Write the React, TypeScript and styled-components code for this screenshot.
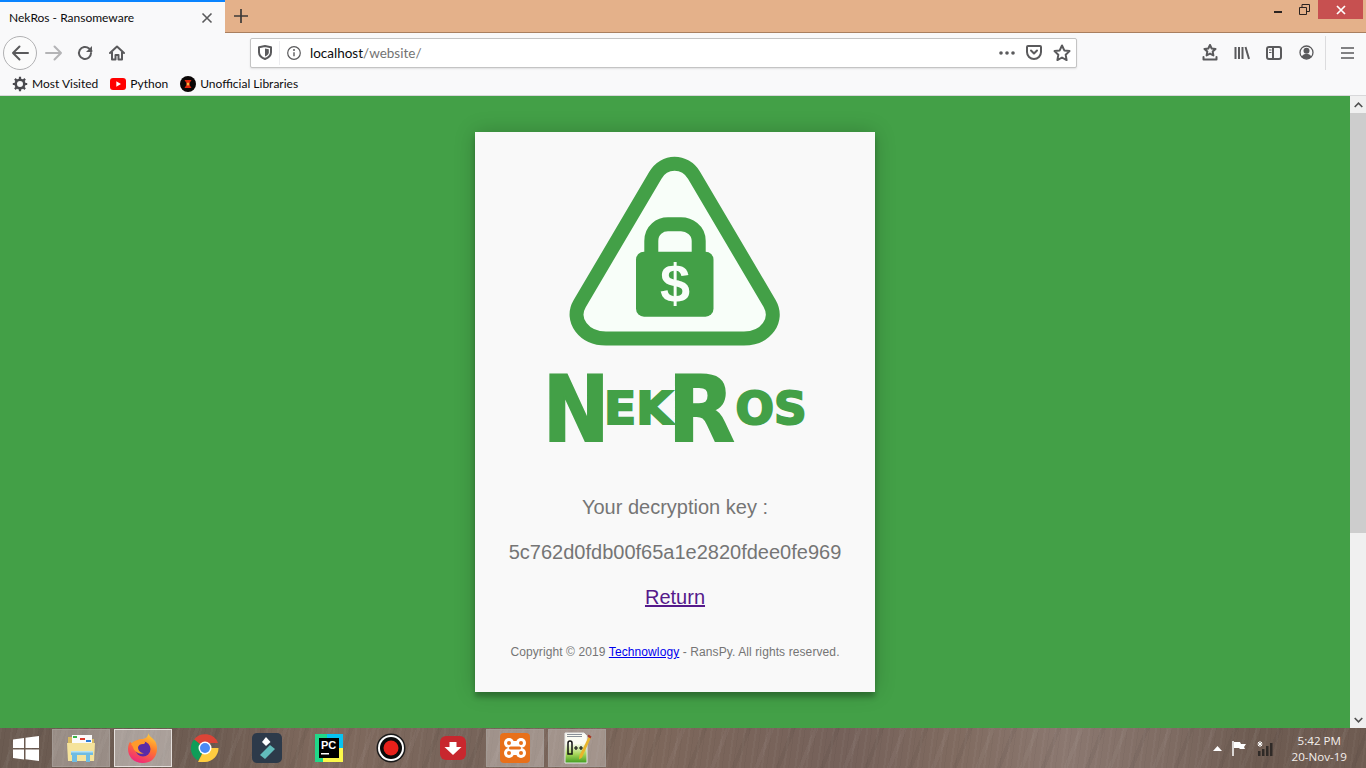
import React from 'react';
import styled, { createGlobalStyle } from 'styled-components';

const UI_FONT = 'Lato, "Open Sans", sans-serif';
const GREEN = '#43a047';
const ICON = '#5a5a5c';

const Global = createGlobalStyle`
  html, body {
    margin: 0;
    padding: 0;
    height: 100%;
    overflow: hidden;
  }
  #root {
    height: 100%;
  }
`;

const Screen = styled.div`
  width: 1366px;
  height: 768px;
  display: flex;
  flex-direction: column;
  overflow: hidden;
  font-family: ${UI_FONT};
`;

const TitleBar = styled.div`
  height: 33px;
  flex: none;
  display: flex;
  background: #e4b18a;
  border-bottom: 1px solid #a97f5f;
  box-sizing: border-box;
`;

const Tab = styled.div`
  width: 225px;
  height: 33px;
  box-sizing: border-box;
  border-top: 2px solid #0a84ff;
  background: #f9f9fa;
  display: flex;
  align-items: center;
  justify-content: space-between;
  padding: 0 12px 0 9px;
  font-size: 12px;
  color: #0c0c0d;
`;

const PlusButton = styled.div`
  width: 32px;
  display: flex;
  align-items: center;
  justify-content: center;
`;

const WinButtons = styled.div`
  margin-left: auto;
  margin-right: 3px;
  display: flex;
  align-items: flex-start;
`;

const WinButton = styled.div<{ $w: number; $close?: boolean }>`
  width: ${(p) => p.$w}px;
  height: 19px;
  display: flex;
  align-items: center;
  justify-content: center;
  background: ${(p) => (p.$close ? '#c75050' : 'transparent')};
`;

const NavBar = styled.div`
  height: 39px;
  flex: none;
  display: flex;
  align-items: center;
  background: #f9f9fa;
  padding: 0 3px;
`;

const BackCircle = styled.div`
  width: 32px;
  height: 32px;
  border: 1px solid #b1b1b3;
  border-radius: 50%;
  background: #fbfbfb;
  display: flex;
  align-items: center;
  justify-content: center;
`;

const NavIcon = styled.div<{ $w: number }>`
  width: ${(p) => p.$w}px;
  display: flex;
  justify-content: center;
  align-items: center;
`;

const UrlBar = styled.div`
  width: 827px;
  height: 30px;
  box-sizing: border-box;
  margin-left: 116px;
  background: #fff;
  border: 1px solid #c4c4c4;
  border-radius: 2px;
  box-shadow: 0 1px 2px rgba(0, 0, 0, 0.1);
  display: flex;
  align-items: center;
  padding: 0 5px 0 7px;
`;

const UrlDivider = styled.div`
  width: 1px;
  height: 24px;
  background: #ededf0;
  margin: 0 7px;
`;

const UrlText = styled.div`
  margin-left: 9px;
  flex: 1;
  font-size: 13.5px;
  color: #0c0c0d;
`;

const UrlPath = styled.span`
  color: #737373;
`;

const UrlActions = styled.div`
  display: flex;
  align-items: center;
  gap: 11px;
`;

const ToolIcons = styled.div`
  margin-left: auto;
  display: flex;
  align-items: center;
`;

const ToolIcon = styled.div`
  width: 32px;
  display: flex;
  justify-content: center;
`;

const ToolDivider = styled.div`
  width: 1px;
  height: 34px;
  background: #dcdcde;
  margin: 0 5px 0 3px;
`;

const BookmarkBar = styled.div`
  height: 24px;
  flex: none;
  box-sizing: border-box;
  display: flex;
  align-items: center;
  gap: 12px;
  background: #f9f9fa;
  border-bottom: 1px solid #d8d8da;
  padding-left: 12px;
  font-size: 12px;
  color: #0c0c0d;
`;

const Bookmark = styled.div`
  display: flex;
  align-items: center;
  gap: 4px;
`;

const Viewport = styled.div`
  flex: 1;
  min-height: 0;
  display: flex;
`;

const Page = styled.main`
  flex: 1;
  background: ${GREEN};
  display: flex;
  justify-content: center;
  padding-top: 36px;
`;

const Scrollbar = styled.div`
  width: 16px;
  background: #f0f0f0;
  display: flex;
  flex-direction: column;
`;

const ScrollArrow = styled.div`
  height: 17px;
  flex: none;
  display: flex;
  align-items: center;
  justify-content: center;
`;

const ScrollThumb = styled.div`
  height: 420px;
  background: #cdcdcd;
  margin-bottom: auto;
`;

const Card = styled.section`
  width: 400px;
  height: 560px;
  box-sizing: border-box;
  background: #f9f9f9;
  box-shadow: 0 0 20px rgba(0, 0, 0, 0.2), 0 5px 5px rgba(0, 0, 0, 0.24);
  padding-top: 23px;
  display: flex;
  flex-direction: column;
  align-items: center;
  font-family: "Liberation Sans", Arial, sans-serif;
  color: #757575;
`;

const Logo = styled.svg`
  display: block;
  flex: none;
`;

const KeyLine = styled.div`
  font-size: 20px;
  line-height: 23px;
  margin-top: 22px;
`;

const KeyHeading = styled(KeyLine)`
  margin-top: 33px;
`;

const ReturnLink = styled.a`
  font-size: 20px;
  line-height: 23px;
  margin-top: 22px;
  color: #551a8b;
  text-decoration: underline;
`;

const Copyright = styled.div`
  font-size: 12px;
  line-height: 14px;
  letter-spacing: 0.1px;
  margin-top: 36px;
`;

const CopyrightLink = styled.a`
  color: #0000ee;
  text-decoration: underline;
`;

const Taskbar = styled.footer`
  height: 40px;
  flex: none;
  display: flex;
  align-items: center;
  color: #fff;
  background:
    repeating-linear-gradient(98deg, rgba(255, 255, 255, 0.03) 0 2px, transparent 2px 5px, rgba(0, 0, 0, 0.03) 5px 6px, transparent 6px 11px),
    repeating-linear-gradient(112deg, transparent 0 17px, rgba(255, 255, 255, 0.035) 17px 21px, transparent 21px 37px, rgba(0, 0, 0, 0.045) 37px 41px),
    linear-gradient(90deg, #6b5b51 0%, #6e5c52 16%, #806a5e 24%, #77645a 34%, #7d675b 48%, #75615a 62%, #806b60 70%, #8b7870 78%, #7e6b62 86%, #6d5b51 92%, #6f5c52 100%);
`;

const StartButton = styled.div`
  width: 52px;
  display: flex;
  justify-content: center;
`;

const TaskSlot = styled.div<{ $state?: 'open' | 'active' }>`
  width: 58px;
  height: 38px;
  margin-right: 4px;
  box-sizing: border-box;
  display: flex;
  align-items: center;
  justify-content: center;
  border: 1px solid
    ${(p) => (p.$state === 'active' ? '#e4dfdc' : p.$state === 'open' ? '#a39a94' : 'transparent')};
  background: ${(p) =>
    p.$state === 'active'
      ? 'rgba(255,255,255,0.42)'
      : p.$state === 'open'
        ? 'rgba(255,255,255,0.3)'
        : 'transparent'};
`;

const Tray = styled.div`
  margin-left: auto;
  display: flex;
  align-items: center;
  padding-right: 19px;
`;

const TrayIcons = styled.div`
  display: flex;
  align-items: center;
  gap: 10px;
  margin-right: 19px;
`;

const Clock = styled.div`
  font-family: "Open Sans", sans-serif;
  font-size: 11.6px;
  line-height: 16px;
  padding-top: 2px;
  text-align: center;
  color: #f4efec;
`;

const stroke = { fill: 'none', stroke: ICON, strokeWidth: 2, strokeLinecap: 'round', strokeLinejoin: 'round' } as const;

function BrowserChrome() {
  return (
    <>
      <TitleBar>
        <Tab>
          <span>NekRos - Ransomeware</span>
          <svg width="12" height="12" viewBox="0 0 12 12">
            <path d="M1.5 1.5l9 9M10.5 1.5l-9 9" stroke={ICON} strokeWidth="1.6" />
          </svg>
        </Tab>
        <PlusButton>
          <svg width="14" height="14" viewBox="0 0 14 14">
            <path d="M7 0v14M0 7h14" stroke="#3c3a38" strokeWidth="1.7" />
          </svg>
        </PlusButton>
        <WinButtons>
          <WinButton $w={26}>
            <svg width="10" height="7" viewBox="0 0 10 7"><rect x="1" y="5" width="8" height="2" fill="#2b2320" /></svg>
          </WinButton>
          <WinButton $w={27}>
            <svg width="11" height="11" viewBox="0 0 11 11">
              <path d="M.5 3.5h7v7h-7zM3 3.5V.5h7.5v7H7.5" fill="none" stroke="#2b2320" />
            </svg>
          </WinButton>
          <WinButton $w={45} $close>
            <svg width="10" height="10" viewBox="0 0 10 10">
              <path d="M1 1l8 8M9 1L1 9" stroke="#fff" strokeWidth="1.7" />
            </svg>
          </WinButton>
        </WinButtons>
      </TitleBar>
      <NavBar>
        <BackCircle>
          <svg width="18" height="16" viewBox="0 0 18 16">
            <path d="M17 8H2M8.5 1.5L2 8l6.5 6.5" {...stroke} />
          </svg>
        </BackCircle>
        <NavIcon $w={33}>
          <svg width="18" height="16" viewBox="0 0 18 16">
            <path d="M1 8h15M9.5 1.5L16 8l-6.5 6.5" {...stroke} stroke="#b4b4b6" />
          </svg>
        </NavIcon>
        <NavIcon $w={30}>
          <svg width="16" height="16" viewBox="0 0 16 16">
            <path d="M14 8a6 6 0 1 1-1.9-4.4L14.5 6" {...stroke} />
            <path d="M15 1v6H9z" fill={ICON} />
          </svg>
        </NavIcon>
        <NavIcon $w={34}>
          <svg width="16" height="16" viewBox="0 0 16 16">
            <path d="M1 8l7-6.5L15 8M3 7v7.5h3.5V10h3v4.5H13V7" {...stroke} />
          </svg>
        </NavIcon>
        <UrlBar>
          <svg width="14" height="15" viewBox="0 0 14 15">
            <path d="M1 2.2L7 1l6 1.2v5c0 3.2-2.6 5.5-6 6.8-3.4-1.3-6-3.6-6-6.8z" {...stroke} />
            <path d="M7 3.5l3.8.8v3c0 2-1.6 3.3-3.8 4.3z" fill={ICON} />
          </svg>
          <UrlDivider />
          <svg width="14" height="14" viewBox="0 0 14 14">
            <circle cx="7" cy="7" r="6.3" fill="none" stroke={ICON} strokeWidth="1.2" />
            <path d="M7 6.2v4" stroke={ICON} strokeWidth="1.4" />
            <circle cx="7" cy="4" r="1" fill={ICON} />
          </svg>
          <UrlText>
            localhost<UrlPath>/website/</UrlPath>
          </UrlText>
          <UrlActions>
            <svg width="16" height="4" viewBox="0 0 16 4" fill={ICON}>
              <circle cx="2" cy="2" r="1.8" /><circle cx="8" cy="2" r="1.8" /><circle cx="14" cy="2" r="1.8" />
            </svg>
            <svg width="16" height="15" viewBox="0 0 16 15">
              <path d="M1 2a1 1 0 0 1 1-1h12a1 1 0 0 1 1 1v5a7 7 0 0 1-14 0z" {...stroke} />
              <path d="M5 5.5l3 3 3-3" {...stroke} />
            </svg>
            <svg width="18" height="17" viewBox="0 0 18 17">
              <path d="M9 1.5l2.3 4.9 5.2.7-3.8 3.7.9 5.3L9 13.5l-4.600 2.6.9-5.3L1.5 7.100l5.2-.7z" {...stroke} />
            </svg>
          </UrlActions>
        </UrlBar>
        <ToolIcons>
          <ToolIcon>
            <svg width="16" height="17" viewBox="0 0 16 17">
              <path d="M8 1l1.7 3.5 3.8.5-2.8 2.6.7 3.8L8 9.600l-3.4 1.8.7-3.8L2.5 5l3.8-.5z" {...stroke} />
              <path d="M1.5 13v2.500h13V13" {...stroke} />
            </svg>
          </ToolIcon>
          <ToolIcon>
            <svg width="16" height="14" viewBox="0 0 16 14">
              <path d="M1.5 1v12M5 1v12M8.5 1v12M11.5 1L15 13" {...stroke} strokeLinecap="butt" />
            </svg>
          </ToolIcon>
          <ToolIcon>
            <svg width="16" height="14" viewBox="0 0 16 14">
              <rect x="1" y="1" width="14" height="12" rx="2" {...stroke} />
              <path d="M7 1.5v11" {...stroke} />
              <path d="M3 4h2.5M3 6.5h2.5" stroke={ICON} strokeWidth="1" />
            </svg>
          </ToolIcon>
          <ToolIcon>
            <svg width="15" height="15" viewBox="0 0 15 15">
              <circle cx="7.5" cy="7.5" r="6.5" fill="none" stroke={ICON} strokeWidth="1.3" />
              <circle cx="7.5" cy="5.8" r="3" fill={ICON} />
              <path d="M2.5 12c1-2.5 3-3 5-3s4 .5 5 3c-1.5 1.3-3 1.8-5 1.8s-3.5-.5-5-1.8z" fill={ICON} />
            </svg>
          </ToolIcon>
          <ToolDivider />
          <ToolIcon>
            <svg width="13" height="12" viewBox="0 0 13 12">
              <path d="M0 1h13M0 6h13M0 11h13" stroke={ICON} strokeWidth="1.7" />
            </svg>
          </ToolIcon>
        </ToolIcons>
      </NavBar>
      <BookmarkBar>
        <Bookmark>
          <svg width="16" height="16" viewBox="0 0 16 16">
            <circle cx="8" cy="8" r="4.3" fill="none" stroke="#4a4a4f" strokeWidth="2.6" />
            <path d="M8 .8v3M8 12.2v3M.8 8h3M12.2 8h3M2.9 2.9L5 5M11 11l2.1 2.1M13.1 2.9L11 5M5 11l-2.1 2.1" stroke="#4a4a4f" strokeWidth="2.2" />
          </svg>
          Most Visited
        </Bookmark>
        <Bookmark>
          <svg width="16" height="12" viewBox="0 0 16 12">
            <rect width="16" height="12" rx="3" fill="#f00" />
            <path d="M6.3 3.3L11 6l-4.7 2.7z" fill="#fff" />
          </svg>
          Python
        </Bookmark>
        <Bookmark>
          <svg width="16" height="16" viewBox="0 0 16 16">
            <circle cx="8" cy="8" r="8" fill="#0a0606" />
            <path d="M4.5 4h7L9 8l2.5 4h-7L7 8z" fill="#e0280f" />
            <circle cx="8" cy="8" r="1.5" fill="#ffb03a" />
          </svg>
          Unofficial Libraries
        </Bookmark>
      </BookmarkBar>
    </>
  );
}

function NekrosLogo() {
  return (
    <Logo width="280" height="308" viewBox="535 155 280 308" role="img" aria-label="NekRos">
      <path
        d="M606 338.5H744C766 338.5 779 320 769.7 303.6L694 175.3C685 160 664 160 655.4 175.3L579.7 303.6C570 320 584 338.5 606 338.5Z"
        fill="#f8fef9"
        stroke={GREEN}
        strokeWidth="14"
      />
      <path d="M651.3 252V241C651.3 230 660 224.3 668 224.3H681C689 224.3 698.7 230 698.7 241V252" fill="none" stroke={GREEN} strokeWidth="14" />
      <rect x="636" y="251.7" width="77.5" height="65" rx="8" fill={GREEN} />
      <text x="675" y="302" textAnchor="middle" fontFamily='"Liberation Sans", sans-serif' fontWeight="700" fontSize="54" fill="#f8fef9">$</text>
      <g fontFamily='"DejaVu Sans", sans-serif' fontWeight="700" fill={GREEN} stroke={GREEN} strokeWidth="2">
        <text transform="translate(543 440.5) scale(0.88 1)" fontSize="90">N</text>
        <text transform="translate(604 424) scale(1.07 1)" fontSize="44">EK</text>
        <text transform="translate(668 440.5) scale(0.96 1)" fontSize="90">R</text>
        <text transform="translate(735.5 424) scale(1.03 1)" fontSize="44">OS</text>
      </g>
    </Logo>
  );
}

function FolderIcon() {
  return (
    <svg width="32" height="32" viewBox="0 0 32 32">
      <path d="M3 5h9l2 2h15v20H3z" fill="#d9bb62" />
      <rect x="7" y="3" width="20" height="9" fill="#fafafa" />
      <rect x="8" y="4" width="4" height="2" fill="#3ab54a" />
      <rect x="15" y="6" width="5" height="2" fill="#d93a2b" />
      <rect x="21" y="8" width="5" height="2" fill="#2f7ed8" />
      <path d="M2 11h28l-1 18H3z" fill="#f5e39c" />
      <path d="M6 19h22v4h-3v7h-4v-7H12v7H7v-7H6z" fill="#6fbce3" />
      <path d="M6 19h22v1.5H6z" fill="#b6e2f5" />
    </svg>
  );
}

function FirefoxIcon() {
  return (
    <svg width="32" height="34" viewBox="0 0 32 34">
      <defs>
        <linearGradient id="ffx" x1="0.7" y1="0" x2="0.3" y2="1">
          <stop offset="0" stopColor="#ffd43a" />
          <stop offset="0.45" stopColor="#ff7a2c" />
          <stop offset="1" stopColor="#f0237f" />
        </linearGradient>
      </defs>
      <path d="M21 1c0 4 4 5 7 9 4 6 3 22-12 22C6 32 1 25 1 18c0-3 1-6 2-7l3 2c2-3 5-5 9-5 3 0 7-2 6-7z" fill="url(#ffx)" />
      <circle cx="16" cy="18" r="7.5" fill="#5b2ba6" />
      <path d="M4 13c3-4 9-5 13-3 2 1 1 3-1 3-3 0-4 1-5 3 0 4 3 6 6 6-4 2-10-1-11-6z" fill="#ff9a2c" />
    </svg>
  );
}

function ChromeIcon() {
  return (
    <svg width="30" height="30" viewBox="0 0 30 30">
      <path d="M15 15L4 6.5A14 14 0 0 1 28 10H15z" fill="#db4437" />
      <path d="M15 15l-7 12.5A14 14 0 0 1 4 6.5z" fill="#0f9d58" />
      <path d="M15 15h13.5A14 14 0 0 1 15 29h-7z" fill="#ffcd40" />
      <circle cx="15" cy="15" r="6.5" fill="#fff" />
      <circle cx="15" cy="15" r="5" fill="#4a8af4" />
    </svg>
  );
}

function FilmoraIcon() {
  return (
    <svg width="30" height="30" viewBox="0 0 30 30">
      <rect width="30" height="30" rx="5" fill="#2d3a4a" />
      <path d="M14 4l4.5 5-4.5 4-4-4z" fill="#fff" />
      <path d="M18 12l5 4-10 10-5-4z" fill="#62bcbb" />
    </svg>
  );
}

function PyCharmIcon() {
  return (
    <svg width="28" height="28" viewBox="0 0 28 28">
      <path d="M0 0h16v12H0z" fill="#21d789" />
      <path d="M12 0h16v16H12z" fill="#07c3f2" />
      <path d="M0 10h10v18H0z" fill="#21d789" />
      <path d="M8 14h20v14H8z" fill="#fcf84a" />
      <rect x="4" y="4" width="20" height="20" fill="#000" />
      <text x="6" y="14.5" fontFamily='"Liberation Sans", sans-serif' fontWeight="700" fontSize="11" fill="#fff">PC</text>
      <rect x="6" y="19" width="8" height="1.5" fill="#fff" />
    </svg>
  );
}

function RecorderIcon() {
  return (
    <svg width="30" height="30" viewBox="0 0 30 30">
      <circle cx="15" cy="15" r="14.5" fill="#1a1a1a" />
      <circle cx="15" cy="15" r="13" fill="#fff" />
      <circle cx="15" cy="15" r="11" fill="#0b0b0b" />
      <circle cx="15" cy="15" r="7.5" fill="#e8201a" />
    </svg>
  );
}

function DownloaderIcon() {
  return (
    <svg width="30" height="30" viewBox="0 0 30 30">
      <rect x="2" y="3" width="26" height="24" rx="6" fill="#c8272e" />
      <path d="M11.5 9h7v5h5L15 22l-8.5-8h5z" fill="#fff" />
    </svg>
  );
}

function XamppIcon() {
  return (
    <svg width="32" height="32" viewBox="0 0 32 32">
      <rect x="1" y="1" width="30" height="30" rx="4" fill="#e8701a" />
      <g fill="#fff">
        <circle cx="10" cy="11" r="5" />
        <circle cx="22" cy="11" r="5" />
        <circle cx="10" cy="21" r="5" />
        <circle cx="22" cy="21" r="5" />
        <rect x="11" y="9" width="10" height="14" />
      </g>
      <g fill="#e8701a">
        <circle cx="10" cy="11" r="2" />
        <circle cx="22" cy="11" r="2" />
        <circle cx="10" cy="21" r="2" />
        <circle cx="22" cy="21" r="2" />
        <rect x="10" y="14.5" width="12" height="3" rx="1.5" />
      </g>
    </svg>
  );
}

function NotepadIcon() {
  return (
    <svg width="32" height="34" viewBox="0 0 32 34">
      <defs>
        <linearGradient id="npp" x1="0" y1="0" x2="0" y2="1">
          <stop offset="0.35" stopColor="#fbfbf2" />
          <stop offset="0.7" stopColor="#a8d65a" />
          <stop offset="1" stopColor="#3f9b1f" />
        </linearGradient>
      </defs>
      <path d="M4 2h19l3 3v27H4z" fill="url(#npp)" stroke="#e8e8e8" />
      <path d="M6 3.5h15M6 5.5h15" stroke="#8a9098" strokeWidth="1" />
      <path d="M7 23V12a2 2 0 0 1 4 0v11z" fill="none" stroke="#111" strokeWidth="1.5" />
      <path d="M13 17h4M15 15v4M18 17h4M20 15v4" stroke="#111" strokeWidth="1.2" />
      <path d="M28 5l2 1.5-9 20-3 2 .5-4z" fill="#e9b52c" />
      <path d="M27.5 3.5l3 2-1 2-3-2z" fill="#a33a2c" />
    </svg>
  );
}

function WindowsIcon() {
  return (
    <svg width="26" height="25" viewBox="0 0 26 25" fill="#fff">
      <path d="M0 3.5L11 2v10H0zM12.5 1.8L26 0v12H12.5zM0 13.5h11v10L0 22zM12.5 13.5H26V25l-13.5-1.8z" />
    </svg>
  );
}

function TaskbarRow() {
  return (
    <Taskbar>
      <StartButton><WindowsIcon /></StartButton>
      <TaskSlot $state="open"><FolderIcon /></TaskSlot>
      <TaskSlot $state="active"><FirefoxIcon /></TaskSlot>
      <TaskSlot><ChromeIcon /></TaskSlot>
      <TaskSlot><FilmoraIcon /></TaskSlot>
      <TaskSlot><PyCharmIcon /></TaskSlot>
      <TaskSlot><RecorderIcon /></TaskSlot>
      <TaskSlot><DownloaderIcon /></TaskSlot>
      <TaskSlot $state="open"><XamppIcon /></TaskSlot>
      <TaskSlot $state="open"><NotepadIcon /></TaskSlot>
      <Tray>
        <TrayIcons>
          <svg width="9" height="5" viewBox="0 0 9 5"><path d="M4.5 0L9 5H0z" fill="#fff" /></svg>
          <svg width="15" height="15" viewBox="0 0 15 15">
            <path d="M1 0v15" stroke="#fff" strokeWidth="1.5" />
            <path d="M2 1h6l1 2h5l-2 3 1 2H8L7 7H2z" fill="#fff" />
          </svg>
          <svg width="16" height="15" viewBox="0 0 16 15" fill="#2f2a27">
            <rect x="1" y="10" width="2.5" height="5" />
            <rect x="5" y="8" width="2.5" height="7" />
            <rect x="9" y="5" width="2.5" height="10" />
            <rect x="13" y="2" width="2.5" height="13" />
            <path d="M3 0v6M.5 3h5M1 1l4 4M5 1L1 5" stroke="#fff" strokeWidth="1" />
          </svg>
        </TrayIcons>
        <Clock>
          5:42 PM
          <br />
          20-Nov-19
        </Clock>
      </Tray>
    </Taskbar>
  );
}

export default function App() {
  return (
    <Screen>
      <Global />
      <BrowserChrome />
      <Viewport>
        <Page>
          <Card>
            <NekrosLogo />
            <KeyHeading>Your decryption key :</KeyHeading>
            <KeyLine>5c762d0fdb00f65a1e2820fdee0fe969</KeyLine>
            <ReturnLink href="#">Return</ReturnLink>
            <Copyright>
              Copyright © 2019 <CopyrightLink href="#">Technowlogy</CopyrightLink> - RansPy. All rights reserved.
            </Copyright>
          </Card>
        </Page>
        <Scrollbar>
          <ScrollArrow>
            <svg width="9" height="6" viewBox="0 0 9 6"><path d="M.7 5l3.8-3.8L8.3 5" fill="none" stroke="#505050" strokeWidth="1.6" /></svg>
          </ScrollArrow>
          <ScrollThumb />
          <ScrollArrow>
            <svg width="9" height="6" viewBox="0 0 9 6"><path d="M.7 1l3.8 3.8L8.3 1" fill="none" stroke="#505050" strokeWidth="1.6" /></svg>
          </ScrollArrow>
        </Scrollbar>
      </Viewport>
      <TaskbarRow />
    </Screen>
  );
}
